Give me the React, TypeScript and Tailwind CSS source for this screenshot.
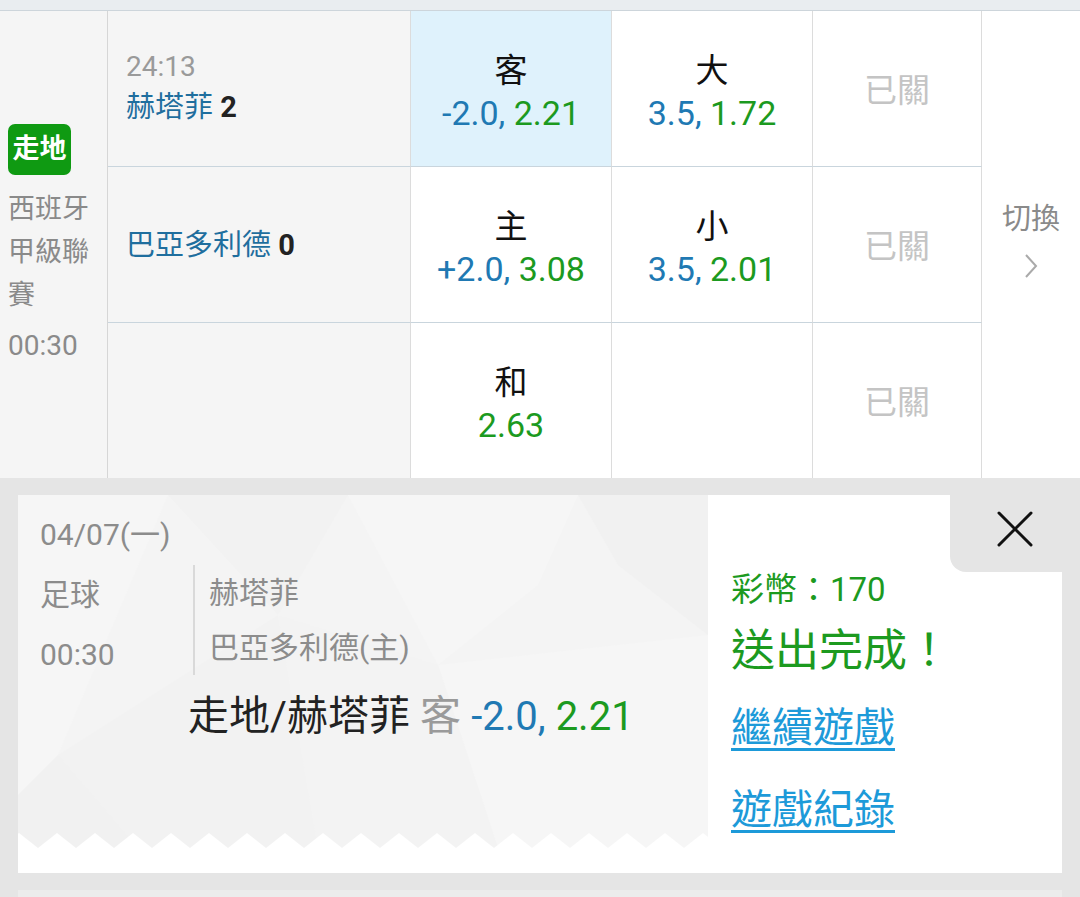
import React from 'react';

const cjk = "font-['Roboto','Noto_Sans_CJK_TC',sans-serif]";

const blue = 'text-[#2079b3]';
const green = 'text-[#1c9a1f]';

function Odds({ line, price }: { line?: string; price: string }) {
  return (
    <div className="text-[34px] leading-[43px]">
      {line && <span className={blue}>{line}, </span>}
      <span className={green}>{price}</span>
    </div>
  );
}

function OddsCell({ label, line, price, active }: { label?: string; line?: string; price?: string; active?: boolean }) {
  return (
    <div
      className={`flex flex-col items-center justify-center pt-[6px] border-r border-b border-r-[#dcdcdc] border-b-[#c9d5dd] ${
        active ? 'bg-[#dff2fc]' : 'bg-white'
      }`}
    >
      {label && <div className="text-[33px] leading-[43px] text-[#111]">{label}</div>}
      {price && <Odds line={line} price={price} />}
    </div>
  );
}

function ClosedCell({ last }: { last?: boolean }) {
  return (
    <div
      className={`flex items-center justify-center pt-[4px] border-r border-r-[#dcdcdc] bg-white ${
        last ? '' : 'border-b border-b-[#c9d5dd]'
      }`}
    >
      <span className="text-[33px] text-[#c4c4c4]">已關</span>
    </div>
  );
}

function TicketPattern() {
  return (
    <svg className="absolute inset-0" width="690" height="353" viewBox="0 0 690 353">
      <polygon points="0,0 150,0 40,260 0,300" fill="#f6f6f6" />
      <polygon points="150,0 330,0 260,120" fill="#f2f2f2" />
      <polygon points="330,0 560,0 520,90 420,170" fill="#f6f6f6" />
      <polygon points="560,0 690,0 690,140 600,70" fill="#f1f1f1" />
      <polygon points="40,260 260,120 300,353 120,353" fill="#f2f2f2" />
      <polygon points="420,170 690,140 690,353 480,353" fill="#f6f6f6" />
      <polygon points="260,120 420,170 480,353 300,353" fill="#f3f3f3" />
      <polygon points="0,300 40,260 120,353 0,353" fill="#f1f1f1" />
    </svg>
  );
}

function Zigzag() {
  return (
    <svg className="absolute left-0 bottom-0" width="690" height="15" viewBox="0 0 690 15">
      <defs>
        <pattern id="zz" x="20" y="0" width="38" height="15" patternUnits="userSpaceOnUse">
          <path d="M0 15 L19 0 L38 15 Z" fill="#ffffff" />
        </pattern>
      </defs>
      <rect width="690" height="15" fill="url(#zz)" />
    </svg>
  );
}

export default function App() {
  return (
    <div className={`w-[1080px] h-[897px] bg-white overflow-hidden flex flex-col ${cjk}`}>
      <div className="h-[11px] shrink-0 bg-[#e9edf0] border-b border-[#cdd5db]" />

      {/* match table */}
      <div className="grid grid-cols-[108px_303px_201px_201px_169px_98px] grid-rows-[156px_156px_155px] shrink-0">
        <div className="row-span-3 bg-[#f5f5f5] border-r border-[#d6d6d6] flex flex-col justify-center pl-[8px] pr-[6px] pt-[2px]">
          <div className="w-[63px] h-[51px] rounded-[7px] bg-[#0f9a12] flex items-center justify-center text-white font-bold text-[27px]">
            走地
          </div>
          <div className="mt-[13px] text-[27px] leading-[43px] text-[#8a8a8a]">西班牙甲級聯賽</div>
          <div className="mt-[7px] text-[28px] leading-[43px] text-[#8a8a8a]">00:30</div>
        </div>

        <div className="bg-[#f5f5f5] border-r border-b border-r-[#dcdcdc] border-b-[#c9d5dd] flex flex-col justify-center pl-[18px] pb-[4px]">
          <div className="text-[28px] leading-[41px] text-[#9a9a9a]">24:13</div>
          <div className="text-[29px] leading-[41px] text-[#1f6e9e]">
            赫塔菲 <span className="font-bold text-[#222]">2</span>
          </div>
        </div>
        <OddsCell label="客" line="-2.0" price="2.21" active />
        <OddsCell label="大" line="3.5" price="1.72" />
        <ClosedCell />
        <div className="row-span-3 bg-white flex flex-col items-center justify-center pb-[7px]">
          <span className="text-[29px] leading-[30px] text-[#8a8a8a]">切換</span>
          <svg className="mt-[19px]" width="14" height="26" viewBox="0 0 14 26" fill="none" stroke="#aaaaaa" strokeWidth="2">
            <path d="M2 2 L12 13 L2 24" />
          </svg>
        </div>

        <div className="bg-[#f5f5f5] border-r border-b border-r-[#dcdcdc] border-b-[#c9d5dd] flex items-center pl-[18px] pt-[2px]">
          <div className="text-[29px] leading-[41px] text-[#1f6e9e]">
            巴亞多利德 <span className="font-bold text-[#222]">0</span>
          </div>
        </div>
        <OddsCell label="主" line="+2.0" price="3.08" />
        <OddsCell label="小" line="3.5" price="2.01" />
        <ClosedCell />

        <div className="bg-[#f5f5f5] border-r border-r-[#dcdcdc]" />
        <div className="flex flex-col items-center justify-center pt-[6px] border-r border-r-[#dcdcdc] bg-white">
          <div className="text-[33px] leading-[43px] text-[#111]">和</div>
          <Odds price="2.63" />
        </div>
        <div className="border-r border-r-[#dcdcdc] bg-white" />
        <ClosedCell last />
      </div>

      {/* bet confirmation */}
      <div className="flex-1 bg-[#e5e5e5] pt-[17px] px-[18px]">
        <div className="h-[378px] flex">
          <div className="w-[690px] flex flex-col">
            <div className="relative h-[353px] bg-[#f4f4f4] overflow-hidden">
              <TicketPattern />
              <Zigzag />
              <div className="relative pl-[22px] pt-[10px] text-[#8c8c8c]">
                <div className="text-[30px] leading-[60px]">04/07(一)</div>
                <div className="flex items-start">
                  <div className="w-[153px]">
                    <div className="text-[30px] leading-[60px]">足球</div>
                    <div className="text-[30px] leading-[60px]">00:30</div>
                  </div>
                  <div className="border-l-2 border-[#d9d9d9] pl-[14px] text-[30px] leading-[55px]">
                    <div>赫塔菲</div>
                    <div>巴亞多利德(主)</div>
                  </div>
                </div>
                <div className="pl-[148px] mt-[1px] text-[41px] leading-[60px] text-[#222] whitespace-nowrap">
                  走地/赫塔菲 <span className="text-[#9a9a9a]">客</span>{' '}
                  <span className="text-[40px]">
                    <span className={blue}>-2.0, </span>
                    <span className={green}>2.21</span>
                  </span>
                </div>
              </div>
            </div>
            <div className="h-[25px] bg-white" />
          </div>

          <div className="flex-1 bg-white flex flex-col">
            <div className="flex justify-end">
              <div className="w-[112px] h-[77px] bg-[#e5e5e5] rounded-bl-[16px] flex justify-end pt-[16px] pr-[29px]">
                <svg width="36" height="36" viewBox="0 0 36 36" stroke="#111" strokeWidth="3" strokeLinecap="round">
                  <path d="M2 2 L34 34 M34 2 L2 34" />
                </svg>
              </div>
            </div>
            <div className="pl-[23px]">
              <div className={`text-[33px] leading-[36px] ${green}`}>彩幣：170</div>
              <div className={`mt-[15px] text-[44px] leading-[56px] ${green}`}>送出完成！</div>
              <div className="mt-[21px] text-[41px] leading-[56px] text-[#1d9ad9] underline decoration-[3px] underline-offset-[6px]">
                繼續遊戲
              </div>
              <div className="mt-[26px] text-[41px] leading-[56px] text-[#1d9ad9] underline decoration-[3px] underline-offset-[6px]">
                遊戲紀錄
              </div>
            </div>
          </div>
        </div>
        <div className="h-[17px]" />
        <div className="h-[7px] bg-[#ececec]" />
      </div>
    </div>
  );
}
